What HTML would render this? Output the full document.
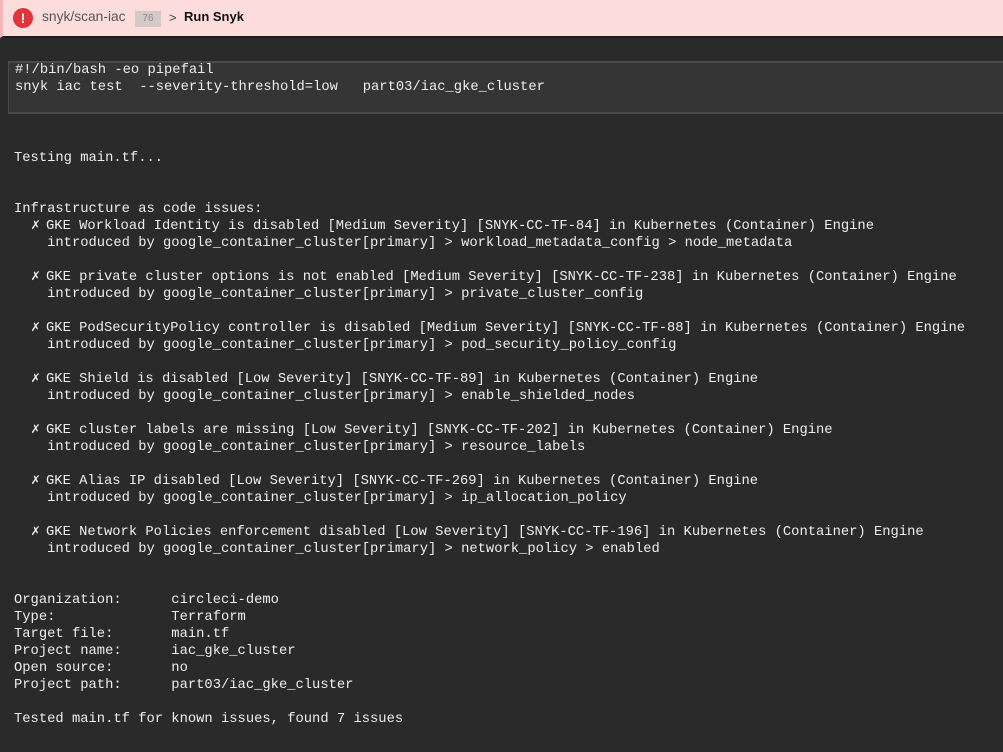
<!DOCTYPE html>
<html><head><style>
body{margin:0;width:1003px;height:752px;background:#2a2a2a;overflow:hidden;position:relative;font-family:"Liberation Sans",sans-serif}
.hdr{position:absolute;left:0;top:0;width:1003px;height:38px;background:#fddcdc;border-left:3px solid #f3b8b8;box-sizing:border-box;border-bottom:2px solid #1e1e1e}
.ic{position:absolute;left:10px;top:8px;width:20px;height:20px;border-radius:50%;background:#e0333a;color:#fff;font-weight:bold;font-size:14px;text-align:center;line-height:20px}
.t1{position:absolute;left:39px;top:9px;font-size:13.8px;color:#555}
.badge{position:absolute;left:132px;top:11px;width:26px;height:16px;background:#d7c8c8;color:#888;font-size:10px;text-align:center;line-height:16px}
.gt{position:absolute;left:166px;top:10px;font-size:13px;color:#444}
.rs{position:absolute;left:181px;top:9px;font-size:13px;color:#111;font-weight:bold}
.box{position:absolute;left:8px;top:61px;width:1000px;height:53px;background:#353535;border-top:2px solid #4a4a4a;border-bottom:2px solid #4a4a4a;border-left:1px solid #4a4a4a;box-sizing:border-box}
pre{position:absolute;margin:0;font-family:"Liberation Mono",monospace;font-size:13.8px;line-height:17px;color:#eeeeee}
.x{display:inline-block;width:1ch;font-size:12px}
</style></head><body>
<div class="hdr"><div class="ic">!</div><div class="t1">snyk/scan-iac</div><div class="badge">76</div><div class="gt">&gt;</div><div class="rs">Run Snyk</div></div>
<div class="box"></div>
<pre style="left:15px;top:62px">#!/bin/bash -eo pipefail
snyk iac test  --severity-threshold=low   part03/iac_gke_cluster</pre>
<pre style="left:14px;top:150px">Testing main.tf...


Infrastructure as code issues:
  <span class="x">✗</span> GKE Workload Identity is disabled [Medium Severity] [SNYK-CC-TF-84] in Kubernetes (Container) Engine
    introduced by google_container_cluster[primary] &gt; workload_metadata_config &gt; node_metadata

  <span class="x">✗</span> GKE private cluster options is not enabled [Medium Severity] [SNYK-CC-TF-238] in Kubernetes (Container) Engine
    introduced by google_container_cluster[primary] &gt; private_cluster_config

  <span class="x">✗</span> GKE PodSecurityPolicy controller is disabled [Medium Severity] [SNYK-CC-TF-88] in Kubernetes (Container) Engine
    introduced by google_container_cluster[primary] &gt; pod_security_policy_config

  <span class="x">✗</span> GKE Shield is disabled [Low Severity] [SNYK-CC-TF-89] in Kubernetes (Container) Engine
    introduced by google_container_cluster[primary] &gt; enable_shielded_nodes

  <span class="x">✗</span> GKE cluster labels are missing [Low Severity] [SNYK-CC-TF-202] in Kubernetes (Container) Engine
    introduced by google_container_cluster[primary] &gt; resource_labels

  <span class="x">✗</span> GKE Alias IP disabled [Low Severity] [SNYK-CC-TF-269] in Kubernetes (Container) Engine
    introduced by google_container_cluster[primary] &gt; ip_allocation_policy

  <span class="x">✗</span> GKE Network Policies enforcement disabled [Low Severity] [SNYK-CC-TF-196] in Kubernetes (Container) Engine
    introduced by google_container_cluster[primary] &gt; network_policy &gt; enabled


Organization:      circleci-demo
Type:              Terraform
Target file:       main.tf
Project name:      iac_gke_cluster
Open source:       no
Project path:      part03/iac_gke_cluster

Tested main.tf for known issues, found 7 issues</pre>
</body></html>
